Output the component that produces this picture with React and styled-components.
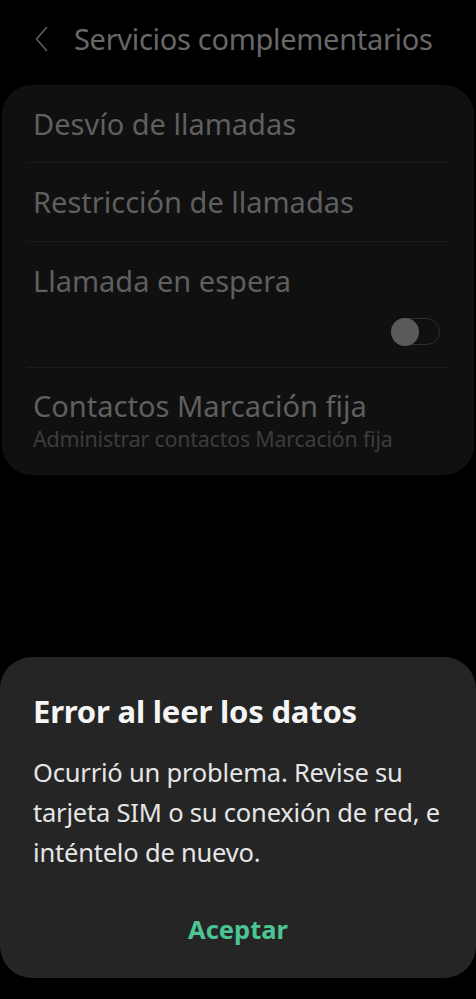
import React from "react";
import styled, { createGlobalStyle } from "styled-components";

const Global = createGlobalStyle`
  html, body { margin: 0; padding: 0; background: #000; }
  body { font-family: "Noto Sans", "Open Sans", sans-serif; -webkit-font-smoothing: antialiased; }
`;

const Page = styled.div`
  position: relative;
  width: 476px;
  height: 999px;
  background: #000;
  overflow: hidden;
  display: flex;
  flex-direction: column;
`;

const Header = styled.header`
  height: 85px;
  display: flex;
  align-items: center;
  padding-left: 35px;
  box-sizing: border-box;
  padding-bottom: 8px;
`;

const Back = styled.svg`
  width: 13px;
  height: 26px;
  margin-right: 26px;
  flex: none;
`;

const Title = styled.h1`
  margin: 0;
  font-size: 29px;
  font-weight: 400;
  color: #686868;
  letter-spacing: -0.3px;
  white-space: nowrap;
`;

const Card = styled.section`
  margin: 0 2px;
  background: #101010;
  border-radius: 30px;
  padding: 0 24px 0 25px;
  display: flex;
  flex-direction: column;
`;

const Row = styled.div`
  height: ${(p) => p.$h}px;
  box-sizing: border-box;
  padding-left: 6px;
  display: flex;
  flex-direction: column;
  justify-content: ${(p) => (p.$top ? "flex-start" : "center")};
  padding-top: ${(p) => p.$pt || 0}px;
  border-bottom: ${(p) => (p.$last ? "none" : "1px solid #1c1c1c")};
`;

const RowTitle = styled.div`
  font-size: 29px;
  color: #5f5f5f;
  line-height: 34px;
  white-space: nowrap;
  letter-spacing: 0;
`;

const RowSub = styled.div`
  margin-top: 3px;
  font-size: 21.4px;
  color: #3c3c3c;
  line-height: 26px;
  white-space: nowrap;
  letter-spacing: -0.2px;
`;

const SwitchWrap = styled.div`
  align-self: flex-end;
  margin-top: 20px;
  margin-right: 10px;
  width: 49px;
  height: 27px;
  box-sizing: border-box;
  border: 1.5px solid #2e2e2e;
  border-radius: 14px;
  position: relative;
`;

const Knob = styled.div`
  position: absolute;
  left: -1px;
  top: -1px;
  width: 28px;
  height: 28px;
  border-radius: 50%;
  background: #5a5a5a;
`;

const Dialog = styled.div`
  position: absolute;
  left: 0;
  right: 0;
  top: 657px;
  height: 321px;
  background: #252525;
  border-radius: 32px;
  padding: 33px 33px 0;
  box-sizing: border-box;
  display: flex;
  flex-direction: column;
`;

const DialogTitle = styled.h2`
  margin: 0;
  font-size: 31px;
  font-weight: 700;
  color: #f5f5f5;
  line-height: 42px;
  letter-spacing: -0.2px;
`;

const DialogBody = styled.p`
  margin: 20px 0 0;
  font-size: 25.5px;
  line-height: 40px;
  color: #e6e6e6;
  letter-spacing: -0.2px;
  white-space: nowrap;
`;

const Action = styled.button`
  margin: 40px auto 0;
  background: none;
  border: 0;
  padding: 0;
  font-family: inherit;
  font-size: 25.5px;
  font-weight: 700;
  color: #4cc493;
  line-height: 34px;
`;

export default function App() {
  return (
    <>
      <Global />
      <Page>
        <Header>
          <Back viewBox="0 0 13 26" fill="none">
            <path d="M11.5 1.5 L1.5 13 L11.5 24.5" stroke="#5e5e5e" strokeWidth="1.6" strokeLinecap="round" strokeLinejoin="round" />
          </Back>
          <Title>Servicios complementarios</Title>
        </Header>
        <Card>
          <Row $h={78}>
            <RowTitle>Desvío de llamadas</RowTitle>
          </Row>
          <Row $h={79}>
            <RowTitle>Restricción de llamadas</RowTitle>
          </Row>
          <Row $h={126} $top $pt={22}>
            <RowTitle>Llamada en espera</RowTitle>
            <SwitchWrap>
              <Knob />
            </SwitchWrap>
          </Row>
          <Row $h={107} $last $top $pt={21}>
            <RowTitle>Contactos Marcación fija</RowTitle>
            <RowSub>Administrar contactos Marcación fija</RowSub>
          </Row>
        </Card>
        <Dialog>
          <DialogTitle>Error al leer los datos</DialogTitle>
          <DialogBody>
            Ocurrió un problema. Revise su
            <br />
            tarjeta SIM o su conexión de red, e
            <br />
            inténtelo de nuevo.
          </DialogBody>
          <Action>Aceptar</Action>
        </Dialog>
      </Page>
    </>
  );
}
